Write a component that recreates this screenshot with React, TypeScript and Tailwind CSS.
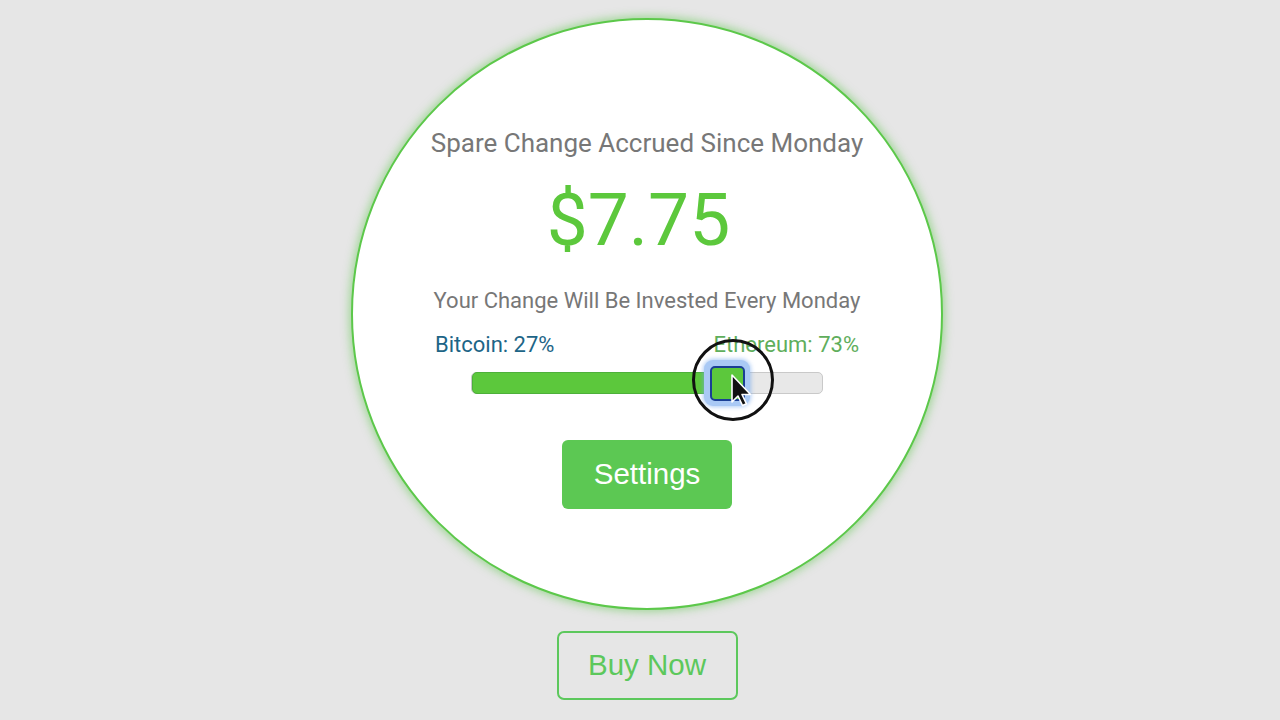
import React from 'react';

const Cursor: React.FC = () => (
  <svg width="90" height="90" viewBox="0 0 90 90" className="absolute left-[-45px] top-[-45px] pointer-events-none">
    <circle cx="45" cy="45" r="39.5" fill="none" stroke="#111" strokeWidth="3" />
    <path d="M44 40 L44 67 L50 61 L54.5 70.5 L58.5 68.8 L54 59.5 L62.5 59.5 Z" fill="#111" stroke="#fff" strokeWidth="1.6" strokeLinejoin="round" />
  </svg>
);

const App: React.FC = () => {
  const btc = 27;
  return (
    <div className="w-[1280px] h-[720px] bg-[#e6e6e6] flex flex-col items-center pl-[14px] overflow-hidden font-['Roboto',sans-serif]">
      {/* Main circle */}
      <div className="mt-[18px] w-[592px] h-[592px] shrink-0 rounded-full bg-white border-2 border-[#5cc84a] shadow-[0_0_8px_2px_rgba(92,200,74,0.5)] flex flex-col items-center">
        <h2 className="mt-[106px] text-[26px] leading-[34px] text-[#777]">Spare Change Accrued Since Monday</h2>
        <div className="mt-[16px] pr-[17px] text-[73px] leading-[88px] text-[#5cc83c]">$7.75</div>
        <p className="mt-[22px] text-[22px] leading-[30px] text-[#777]">Your Change Will Be Invested Every Monday</p>

        {/* Allocation labels */}
        <div className="mt-[15px] w-[424px] flex justify-between text-[22px] leading-[28px]">
          <span className="text-[#1d6587]">Bitcoin: {btc}%</span>
          <span className="text-[#5fae5c]">Ethereum: {100 - btc}%</span>
        </div>

        {/* Slider */}
        <div className="relative mt-[13px] w-[352px] h-[22px] rounded-[5px] bg-[#e8e8e8] border border-[#c9c9c9]">
          <div className="absolute left-0 top-[-1px] h-[22px] w-[240px] rounded-l-[5px] bg-[#5cc83c] border border-[#4db03a]" />
          <div className="absolute left-[232px] top-[-13px] w-[46px] h-[46px] rounded-[9px] bg-[#a9c9f5] shadow-[0_0_4px_1px_rgba(120,170,240,0.6)] flex items-center justify-center">
            <div className="w-[35px] h-[35px] rounded-[5px] bg-[#5cc83c] border-2 border-[#1a3f95]" />
            <div className="absolute left-[29px] top-[20px]">
              <Cursor />
            </div>
          </div>
        </div>

        <button className="mt-[46px] w-[170px] h-[69px] rounded-[6px] bg-[#5cc853] text-white text-[29.5px] font-['Liberation_Sans',sans-serif]">
          Settings
        </button>
      </div>

      <button className="mt-[21px] w-[181px] h-[69px] rounded-[7px] border-2 border-[#5cc85c] text-[#5cc85c] text-[29.5px] font-['Liberation_Sans',sans-serif]">
        Buy Now
      </button>
    </div>
  );
};

export default App;
